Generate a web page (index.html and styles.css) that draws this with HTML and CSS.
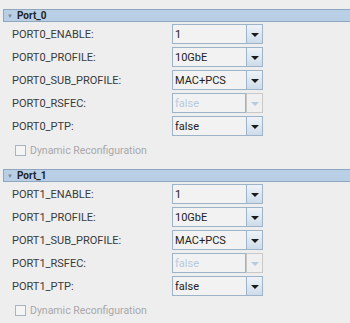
FILE: index.html
```html
<!DOCTYPE html>
<html>
<head>
<meta charset="utf-8">
<link rel="stylesheet" href="styles.css">
</head>
<body>
<div class="page">
  <section class="group">
    <div class="header"><span class="tri">▼</span><span class="title">Port_0</span></div>
    <div class="rows">
      <div class="label">PORT0_ENABLE:</div>
      <div class="combo"><span class="val">1</span><span class="btn"><i class="arrow"></i></span></div>
      <div class="label">PORT0_PROFILE:</div>
      <div class="combo"><span class="val">10GbE</span><span class="btn"><i class="arrow"></i></span></div>
      <div class="label">PORT0_SUB_PROFILE:</div>
      <div class="combo"><span class="val">MAC+PCS</span><span class="btn"><i class="arrow"></i></span></div>
      <div class="label">PORT0_RSFEC:</div>
      <div class="combo disabled"><span class="val">false</span><span class="btn"><i class="arrow"></i></span></div>
      <div class="label">PORT0_PTP:</div>
      <div class="combo"><span class="val">false</span><span class="btn"><i class="arrow"></i></span></div>
    </div>
    <div class="check"><span class="box"></span><span class="ctext">Dynamic Reconfiguration</span></div>
  </section>
  <section class="group">
    <div class="header"><span class="tri">▼</span><span class="title">Port_1</span></div>
    <div class="rows">
      <div class="label">PORT1_ENABLE:</div>
      <div class="combo"><span class="val">1</span><span class="btn"><i class="arrow"></i></span></div>
      <div class="label">PORT1_PROFILE:</div>
      <div class="combo"><span class="val">10GbE</span><span class="btn"><i class="arrow"></i></span></div>
      <div class="label">PORT1_SUB_PROFILE:</div>
      <div class="combo"><span class="val">MAC+PCS</span><span class="btn"><i class="arrow"></i></span></div>
      <div class="label">PORT1_RSFEC:</div>
      <div class="combo disabled"><span class="val">false</span><span class="btn"><i class="arrow"></i></span></div>
      <div class="label">PORT1_PTP:</div>
      <div class="combo"><span class="val">false</span><span class="btn"><i class="arrow"></i></span></div>
    </div>
    <div class="check"><span class="box"></span><span class="ctext">Dynamic Reconfiguration</span></div>
  </section>
</div>
</body>
</html>
```
FILE: styles.css
```css
html, body {
  margin: 0;
  padding: 0;
  background: #eeeeee;
}
body {
  font-family: Roboto, "Liberation Sans", sans-serif;
  font-size: 11px;
  color: #333333;
  width: 350px;
  height: 323px;
  overflow: hidden;
}
.page {
  display: flex;
  flex-direction: column;
  padding: 9px 0 0 3px;
  gap: 14px;
}
.group {
  display: flex;
  flex-direction: column;
}
.header {
  height: 11px;
  background: #b8cfe6;
  border: 1px solid #8fa6bf;
  border-right: none;
  display: flex;
  align-items: center;
  gap: 4px;
  padding-left: 3px;
}
.tri {
  font-size: 6px;
  color: #7d8a99;
  line-height: 1;
}
.title {
  font-weight: bold;
  font-size: 10px;
  color: #222222;
  line-height: 11px;
}
.rows {
  display: grid;
  grid-template-columns: 160px 91px;
  grid-auto-rows: 20px;
  row-gap: 3px;
  margin-top: 2px;
  padding-left: 9px;
}
.label {
  display: flex;
  align-items: center;
  color: #3a3a3a;
}
.combo {
  display: flex;
  border: 1px solid #9db3c8;
  background: #f2f2f2;
  box-sizing: border-box;
}
.val {
  flex: 1;
  display: flex;
  align-items: center;
  padding-left: 2px;
  color: #222222;
  border-right: 1px solid #9db3c8;
}
.btn {
  width: 15px;
  display: flex;
  align-items: center;
  justify-content: center;
  background: linear-gradient(#eef3f8, #cddcea);
}
.arrow {
  width: 0;
  height: 0;
  border-left: 4px solid transparent;
  border-right: 4px solid transparent;
  border-top: 4px solid #1a1a1a;
  margin-top: 1px;
}
.combo.disabled .val {
  color: #b7cbe0;
}
.combo.disabled .btn {
  background: #f0f0f0;
  border: 1px solid #c8c8c8;
  margin: -1px -1px -1px 0;
}
.combo.disabled .arrow {
  border-top-color: #b7cbe0;
}
.check {
  display: flex;
  align-items: center;
  gap: 4px;
  margin-top: 9px;
  padding-left: 12px;
  height: 10px;
}
.box {
  width: 9px;
  height: 9px;
  border: 1px solid #a7b4c2;
  background: #f4f4f4;
}
.ctext {
  color: #a8a8a8;
  font-size: 10.5px;
}
```
